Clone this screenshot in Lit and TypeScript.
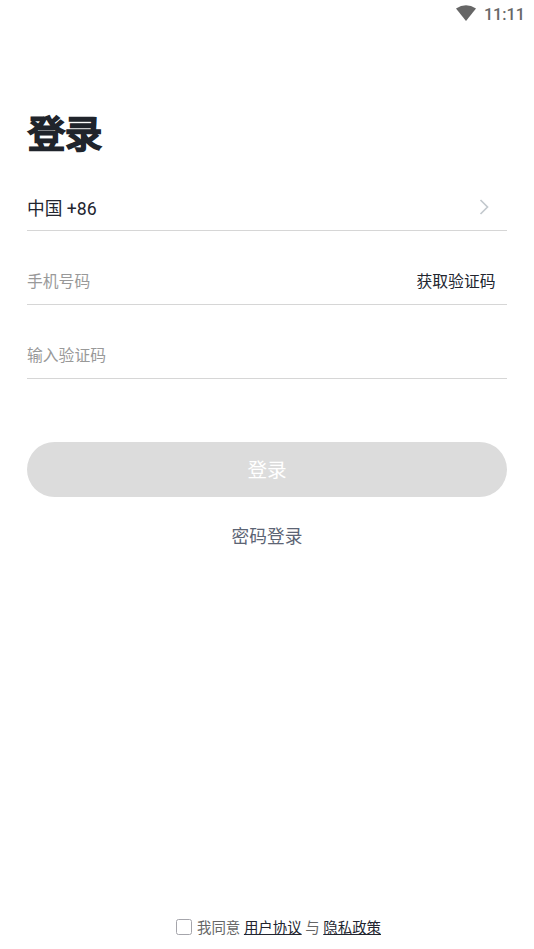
import { LitElement, html, css } from "lit";
import { customElement } from "lit/decorators.js";

@customElement("app-root")
class AppRoot extends LitElement {
  static styles = css`
    :host { display: flex; flex-direction: column; box-sizing: border-box; height: 949px; width: 534px; background: #fff; color: #22252f; font-family: Roboto, "Noto Sans CJK SC", sans-serif; overflow: hidden; }
    .status { height: 30px; display: flex; justify-content: flex-end; align-items: center; gap: 8px; padding-right: 9px; color: #666; font-size: 16.2px; font-weight: 500; line-height: 30px; flex: none; }
    .status svg { display: block; margin-bottom: 4px; }
    main { padding: 0 27px; flex: 1; display: flex; flex-direction: column; }
    h1 { margin: 76px 0 0; padding-left: 1px; font-size: 37px; line-height: 59px; font-weight: 400; height: 55px; color: #20242b; -webkit-text-stroke: 2.4px #20242b; }
    .row { box-sizing: border-box; display: flex; align-items: center; justify-content: space-between; height: 74px; padding-top: 26px; border-bottom: 1px solid #d6d6d6; font-size: 15.8px; color: #999; }
    .country { margin-top: -4px; font-size: 17.7px; color: #22252f; }
    .arrow { margin-right: 18px; display: block; }
    .code { margin-right: 11.5px; color: #22252f; }
    .submit { all: unset; margin-top: 62.6px; height: 55.4px; border-radius: 28px; background: #dcdcdc; color: #fff; font-size: 19.6px; line-height: 57px; text-align: center; }
    .alt { margin-top: 27px; text-align: center; font-size: 17.7px; line-height: 26px; color: #5c6474; }
    .agree { margin-top: auto; height: 22px; margin-bottom: 12px; display: flex; align-items: center; padding-left: 149px; font-size: 14.45px; white-space: pre; color: #666; }
    .box { box-sizing: border-box; width: 16px; height: 16px; border: 1px solid #a5a5ab; border-radius: 2.5px; margin-right: 5px; position: relative; top: 1px; }
    .link { color: #22252f; text-decoration: underline; }
  `;
  render() {
    return html`
      <div class="status">
        <svg width="20" height="16" viewBox="0 0 20 16"><path d="M0 3.5Q10-3.2 20 3.5L10 16Z" fill="#666"/></svg>
        <span>11:11</span>
      </div>
      <main>
        <h1>登录</h1>
        <div class="row country"><span>中国 +86</span>
          <svg class="arrow" width="10" height="16" viewBox="0 0 10 16"><path d="M1.5 1 8.5 8l-7 7" fill="none" stroke="#c3c9ce" stroke-width="1.7"/></svg>
        </div>
        <div class="row"><span>手机号码</span><span class="code">获取验证码</span></div>
        <div class="row"><span>输入验证码</span></div>
        <button class="submit">登录</button>
        <div class="alt">密码登录</div>
        <div class="agree"><span class="box"></span><span>我同意 <span class="link">用户协议</span> 与 <span class="link">隐私政策</span></span></div>
      </main>`;
  }
}
